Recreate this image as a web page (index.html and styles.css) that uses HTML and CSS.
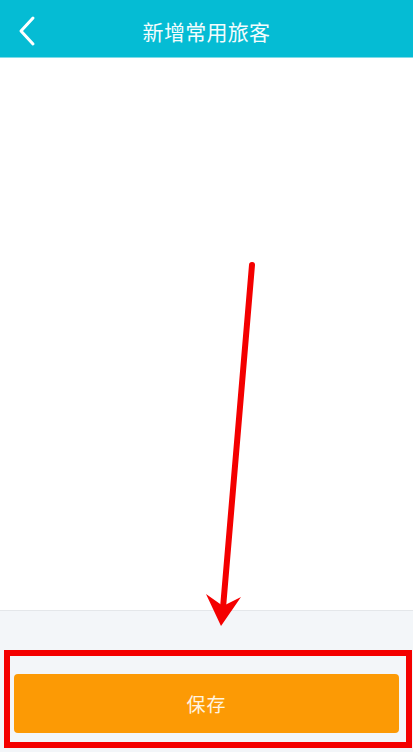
FILE: index.html
```html
<!DOCTYPE html>
<html lang="zh">
<head>
<meta charset="utf-8">
<link rel="stylesheet" href="styles.css">
</head>
<body>
<div class="page">
  <header class="topbar">
    <svg class="back" width="20" height="32" viewBox="0 0 20 32"><polyline points="15,3 3,16 15,29" fill="none" stroke="#fff" stroke-width="3" stroke-linecap="round" stroke-linejoin="round"/></svg>
    <h1 class="title">新增常用旅客</h1>
  </header>
  <main class="content"></main>
  <footer class="footer">
    <button class="save">保存</button>
  </footer>
  <div class="highlight"></div>
  <svg class="arrow" width="413" height="752" viewBox="0 0 413 752">
    <line x1="252" y1="265" x2="223" y2="608" stroke="#f40000" stroke-width="6" stroke-linecap="round"/>
    <polygon points="206,594 223,606 241,597 221,626" fill="#f40000"/>
  </svg>
</div>
</body>
</html>
```
FILE: styles.css
```css
* { box-sizing: border-box; }
html, body { margin: 0; padding: 0; }
body {
  font-family: "Noto Sans CJK SC", "Noto Sans", sans-serif;
  background: #fff;
}
.page {
  position: relative;
  width: 413px;
  height: 752px;
  display: flex;
  flex-direction: column;
  overflow: hidden;
}
.topbar {
  height: 58px;
  background: #05bcd4;
  display: flex;
  align-items: center;
  justify-content: center;
  position: relative;
  border-bottom: 1px solid #7fdbe8;
  flex: none;
}
.back {
  position: absolute;
  left: 18px;
  top: 15px;
}
.title {
  margin: 0;
  color: #f4fcfd;
  font-size: 21px;
  font-weight: 400;
  letter-spacing: 0.3px;
  line-height: 1;
  margin-top: 5px;
}
.content {
  flex: 1;
  background: #fff;
}
.footer {
  flex: none;
  height: 142px;
  background: #f3f6f9;
  border-top: 1px solid #e4e7ea;
  padding: 63px 14px 0 14px;
}
.save {
  display: block;
  width: 100%;
  height: 59px;
  border: none;
  border-radius: 4px;
  background: #fc9a05;
  color: #fff4e0;
  font-family: "Noto Sans CJK SC", sans-serif;
  font-size: 19px;
  letter-spacing: 1px;
  padding: 0;
}
.highlight {
  position: absolute;
  left: 4px;
  top: 650px;
  width: 408px;
  height: 98px;
  border: 6px solid #f40000;
}
.arrow {
  position: absolute;
  left: 0;
  top: 0;
  pointer-events: none;
}
```
